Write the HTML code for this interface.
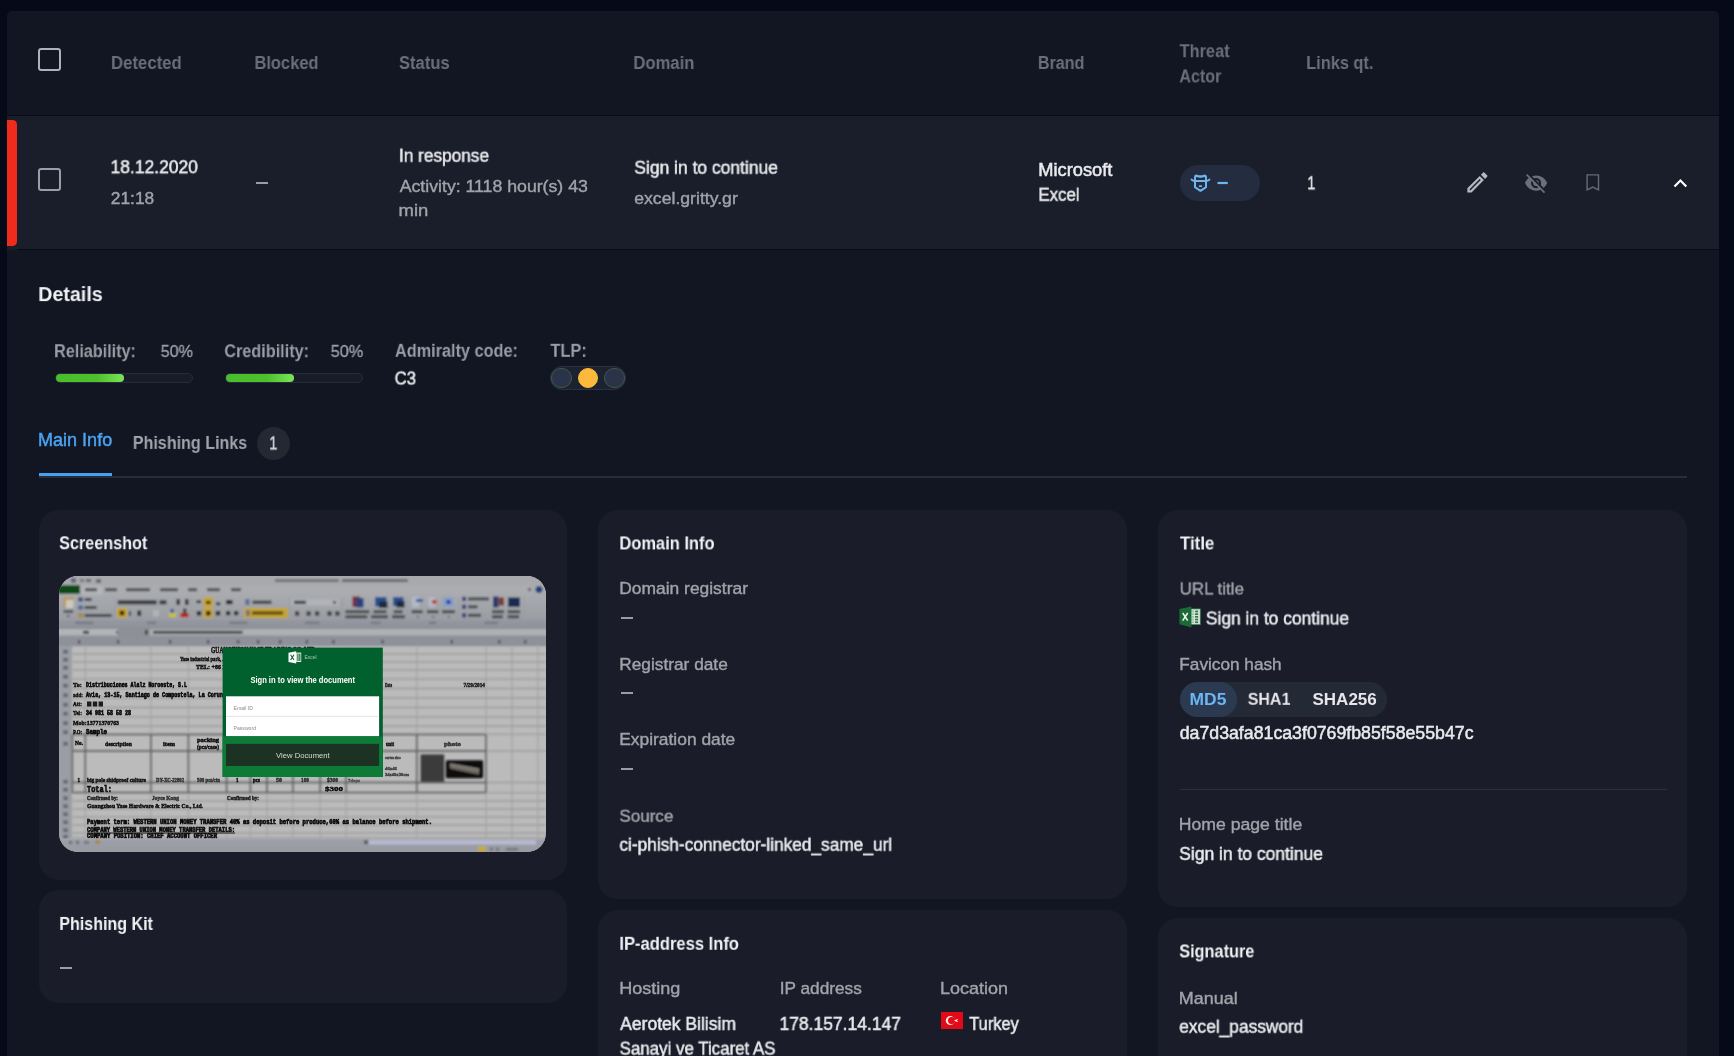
<!DOCTYPE html>
<html lang="en">
<head>
<meta charset="utf-8">
<title>Phishing details</title>
<style>
html,body{margin:0;padding:0;}
body{width:1734px;height:1056px;overflow:hidden;background:#040a17;font-family:"Liberation Sans",sans-serif;position:relative;}
.a{position:absolute;}
.t{position:absolute;white-space:nowrap;line-height:1;transform-origin:0 0;display:block;will-change:transform;}
#cont{left:7px;top:11px;width:1712px;height:1050px;background:#121622;border-radius:5px 5px 0 0;}
#row{left:7px;top:116px;width:1712px;height:134.2px;background:#1a1e2a;}
.hl{left:7px;width:1712px;height:1.4px;background:#070b16;}
#red{left:7px;top:120px;width:10.3px;height:125.9px;background:#ef2b1c;border-radius:0 4.5px 4.5px 0;}
.cb{width:18.9px;height:18.9px;border:2.4px solid #b0b2ba;border-radius:3.2px;}
.dash{height:1.8px;width:12px;background:#9b9da4;}
.card{background:#1a1d29;border-radius:20px;width:528.4px;}
.pill{border-radius:18px;}
.trk{height:8.2px;border:1px solid #272c3a;border-radius:6px;background:#181c28;}
.fill{height:8.4px;border-radius:4px;background:linear-gradient(90deg,#49bd2b 0%,#4dc02d 60%,#7be457 100%);}
.dot{width:18.6px;height:18.6px;border-radius:50%;background:#2a3348;border:1px solid #3c5a4c;}
</style>
</head>
<body>
<div id="cont" class="a"></div>
<div id="row" class="a"></div>
<div class="a hl" style="top:115px"></div>
<div class="a hl" style="top:248.7px;left:17.4px;width:1701.6px;height:1.5px"></div>
<div id="red" class="a"></div>
<div class="a cb" style="left:38.4px;top:47.9px"></div>
<div class="a cb" style="left:38.4px;top:168px;border-color:#9c9ea5"></div>
<div class="a dash" style="left:256.2px;top:182.3px"></div>

<!-- threat actor pill -->
<div class="a pill" style="left:1179.5px;top:165.1px;width:80.2px;height:35.7px;background:#232d3f"></div>
<svg class="a" style="left:1185px;top:170px" width="50" height="26" viewBox="1185 170 50 26" fill="none" stroke="#70b5ef" stroke-width="2" stroke-linejoin="round" stroke-linecap="round">
<path d="M1195 181V177.4Q1195 175.6 1196.8 175.6Q1200.5 176.9 1204.2 175.6Q1206 175.6 1206 177.4V181"/>
<path d="M1196.2 176.4Q1200.5 177.6 1204.8 176.4" stroke-width="1.3"/>
<path d="M1195 181V187.2L1200.5 190.8L1206 187.2V181"/>
<path d="M1191.6 179.6Q1192.8 181 1195 181H1206Q1208.2 181 1209.4 179.6"/>
<path d="M1199.7 186.2H1201.3" stroke-width="1.8"/>
<path d="M1217.5 183H1227.8" stroke-width="2.2" stroke-linecap="butt"/>
</svg>

<!-- action icons -->
<svg class="a" style="left:1463.7px;top:168.7px" width="26.8" height="26.8" viewBox="0 0 24 24" fill="#b6b8bf"><path d="M14.06 9.02l.92.92L5.92 19H5v-.92l9.06-9.06M17.66 3c-.25 0-.51.1-.7.29l-1.83 1.83 3.75 3.75 1.83-1.83c.39-.39.39-1.02 0-1.41l-2.34-2.34c-.2-.2-.45-.29-.71-.29zm-3.6 3.19L3 17.25V21h3.75L17.81 9.94l-3.75-3.75z"/></svg>
<svg class="a" style="left:1523.8px;top:170.8px" width="24.2" height="24.2" viewBox="0 0 24 24" fill="#6c6f7b"><path d="M12 7c2.76 0 5 2.24 5 5 0 .65-.13 1.26-.36 1.83l2.92 2.92c1.51-1.26 2.7-2.89 3.43-4.75-1.73-4.39-6-7.5-11-7.5-1.4 0-2.74.25-3.98.7l2.16 2.16C10.74 7.13 11.35 7 12 7zM2 4.27l2.28 2.28.46.46C3.08 8.3 1.78 10.02 1 12c1.73 4.39 6 7.5 11 7.5 1.55 0 3.03-.3 4.38-.84l.42.42L19.73 22 21 20.73 3.27 3 2 4.27zM7.53 9.8l1.55 1.55c-.05.21-.08.43-.08.65 0 1.66 1.34 3 3 3 .22 0 .44-.03.65-.08l1.55 1.55c-.67.33-1.41.53-2.2.53-2.76 0-5-2.24-5-5 0-.79.2-1.53.53-2.2zm4.31-.78l3.15 3.15.02-.16c0-1.66-1.34-3-3-3l-.17.01z"/></svg>
<svg class="a" style="left:1580px;top:170px" width="26" height="26" viewBox="1580 170 26 26" fill="none" stroke="#676a76" stroke-width="1.4"><path d="M1587.1 174.9H1598.5V189.8L1592.8 187.1L1587.1 189.8Z"/></svg>
<svg class="a" style="left:1667.2px;top:169.7px" width="26.8" height="26.8" viewBox="0 0 24 24" fill="#ffffff"><path d="M12 8l-6 6 1.41 1.41L12 10.83l4.59 4.58L18 14z"/></svg>

<!-- reliability / credibility -->
<div class="a trk" style="left:54.6px;top:373.1px;width:136.3px"></div>
<div class="a fill" style="left:55.7px;top:373.9px;width:68.1px"></div>
<div class="a trk" style="left:224.8px;top:373.1px;width:136.3px"></div>
<div class="a fill" style="left:225.9px;top:373.9px;width:68.1px"></div>

<!-- TLP -->
<div class="a" style="left:549.9px;top:366.3px;width:73.8px;height:21.4px;border:1px solid #2b3140;border-radius:12px;background:#1d2230"></div>
<div class="a dot" style="left:551.2px;top:367.6px"></div>
<div class="a dot" style="left:577.7px;top:367.6px;background:#fdb93b;border-color:#fdb93b"></div>
<div class="a dot" style="left:604.2px;top:367.6px"></div>

<!-- tabs -->
<div class="a" style="left:257.2px;top:426.9px;width:33.2px;height:33.2px;border-radius:50%;background:#242833"></div>
<div class="a" style="left:38.5px;top:475.7px;width:1648px;height:2.2px;background:#292d3a"></div>
<div class="a" style="left:38.5px;top:472.7px;width:73.4px;height:3.1px;background:#46a0f2"></div>

<!-- cards -->
<div class="a card" style="left:38.5px;top:510px;height:369.5px"></div>
<div class="a card" style="left:38.5px;top:890.2px;height:112.6px"></div>
<div class="a card" style="left:598.2px;top:510px;height:389.3px"></div>
<div class="a card" style="left:598.2px;top:909.8px;height:200px"></div>
<div class="a card" style="left:1158.2px;top:510px;height:397.2px"></div>
<div class="a card" style="left:1158.2px;top:918.2px;height:200px"></div>

<div class="a dash" style="left:60.2px;top:967.3px"></div>
<div class="a dash" style="left:620.5px;top:617.4px"></div>
<div class="a dash" style="left:620.5px;top:692.4px"></div>
<div class="a dash" style="left:620.5px;top:768px"></div>

<!-- hash segmented -->
<div class="a pill" style="left:1180px;top:681.8px;width:206.6px;height:35.5px;background:#242936"></div>
<div class="a pill" style="left:1180px;top:681.8px;width:57.3px;height:35.5px;background:#2b3a50"></div>
<div class="a" style="left:1179.5px;top:788.5px;width:487px;height:1.2px;background:#2c303c"></div>

<svg class="a" style="left:940.9px;top:1011.9px" width="22.2" height="17.1" viewBox="0 0 22.2 17.1"><rect width="22.2" height="17.1" fill="#e20a17"/><circle cx="9.3" cy="8.6" r="4.5" fill="#fbeaea"/><circle cx="10.6" cy="8.6" r="3.6" fill="#e20a17"/><path d="M13.6 8.6L16.6 7.6L15.6 8.6L16.6 9.6Z" fill="#fff" stroke="#fff" stroke-width="0.7" stroke-linejoin="round"/></svg>
<svg class="a" style="left:1178px;top:605px" width="24" height="24" viewBox="1178 605 24 24"><rect x="1190.8" y="608.9" width="9.5" height="15.8" fill="#d3e4d8" stroke="#2b7a45" stroke-width="0.7"/><rect x="1195.1" y="610.6" width="3" height="1.7" fill="#2b7a45"/><rect x="1192.2" y="610.6" width="1.6" height="1.7" fill="#8fb99c"/><rect x="1195.1" y="613.3" width="3" height="1.7" fill="#2b7a45"/><rect x="1192.2" y="613.3" width="1.6" height="1.7" fill="#8fb99c"/><rect x="1195.1" y="616" width="3" height="1.7" fill="#2b7a45"/><rect x="1192.2" y="616" width="1.6" height="1.7" fill="#8fb99c"/><rect x="1195.1" y="618.7" width="3" height="1.7" fill="#2b7a45"/><rect x="1192.2" y="618.7" width="1.6" height="1.7" fill="#8fb99c"/><rect x="1195.1" y="621.4" width="3" height="1.7" fill="#2b7a45"/><rect x="1192.2" y="621.4" width="1.6" height="1.7" fill="#8fb99c"/><path d="M1179.4 609.1L1191.4 606.5V627.6L1179.4 624.2Z" fill="#1b6a37"/><path d="M1182.7 613L1187.7 620.6M1187.7 613L1182.7 620.6" stroke="#f2f7f3" stroke-width="1.5"/></svg>
<svg class="a" style="left:59px;top:576px;border-radius:19px" width="487" height="276" viewBox="0 0 487 276"><defs><filter id="b1" x="-5%" y="-5%" width="110%" height="110%"><feGaussianBlur stdDeviation="1.0"/></filter><filter id="b2" x="-5%" y="-5%" width="110%" height="110%"><feGaussianBlur stdDeviation="0.55"/></filter><filter id="b5" x="-5%" y="-5%" width="110%" height="110%"><feGaussianBlur stdDeviation="0.8"/></filter><filter id="b4" x="-5%" y="-5%" width="110%" height="110%"><feGaussianBlur stdDeviation="0.6"/></filter><filter id="b3" x="-5%" y="-5%" width="110%" height="110%"><feGaussianBlur stdDeviation="0.3"/></filter><linearGradient id="rib" x1="0" y1="0" x2="0" y2="1"><stop offset="0" stop-color="#a9abaf"/><stop offset="1" stop-color="#9699a0"/></linearGradient></defs><rect x="0" y="0" width="487" height="276" fill="#bbbbbb" /><g filter="url(#b1)"><rect x="-2" y="-2" width="491" height="12" fill="#a7a9ac" /><rect x="-2" y="9" width="491" height="10" fill="#aaacaf" /><rect x="-2" y="18" width="491" height="33" fill="url(#rib)" /><rect x="-2" y="44.5" width="491" height="6" fill="#92959d" /><rect x="-2" y="50" width="491" height="11.5" fill="#8d9097" /><rect x="-2" y="53" width="61" height="6.6" fill="#b2b4b7" /><rect x="91" y="53" width="400" height="6.6" fill="#aeb0b4" /><rect x="-2" y="61" width="491" height="9.2" fill="#8e919a" /><rect x="-2" y="70" width="15" height="193" fill="#9a9da3" /><rect x="-2" y="9.2" width="23" height="8.6" fill="#0a4a13" /><rect x="23" y="9.8" width="20" height="9" fill="#b4b6b9" /><rect x="216" y="3.2" width="64" height="2.8" fill="#6f7176" /><rect x="283" y="3.2" width="66" height="2.8" fill="#64666b" /><rect x="12" y="2.5" width="5" height="4" fill="#5a5c7a" /><rect x="21" y="3" width="4" height="3" fill="#777" /><rect x="27" y="3" width="5" height="3" fill="#666" /><rect x="37" y="3.5" width="5" height="3" fill="#555" /><rect x="26" y="12.2" width="12" height="3" fill="#4c4e53" /><rect x="46" y="12.2" width="12" height="3" fill="#4c4e53" /><rect x="67" y="12.2" width="24" height="3" fill="#4c4e53" /><rect x="101" y="12.2" width="18" height="3" fill="#4c4e53" /><rect x="129" y="12.2" width="9" height="3" fill="#4c4e53" /><rect x="148" y="12.2" width="13" height="3" fill="#4c4e53" /><rect x="172" y="12.2" width="10" height="3" fill="#4c4e53" /><circle cx="480" cy="13.6" r="3.5" fill="#1f3f7a"/><rect x="469" y="12" width="3" height="3" fill="#666" /><rect x="4.6" y="21" width="10" height="11" fill="#b99a58" /><rect x="7" y="24" width="7.5" height="8" fill="#c9c9c4" /><rect x="4.6" y="34" width="9.5" height="3" fill="#55575c" /><rect x="8" y="39" width="2.5" height="2" fill="#55575c" /><rect x="19" y="21.5" width="5" height="4" fill="#3b4f8a" /><rect x="25.6" y="22" width="7" height="3" fill="#45474c" /><rect x="19" y="29.5" width="5" height="4" fill="#4a6a9a" /><rect x="25.6" y="30" width="12" height="3" fill="#45474c" /><rect x="19" y="37.5" width="5" height="4" fill="#a98a2a" /><rect x="25.6" y="38" width="27" height="3" fill="#45474c" /><rect x="58" y="32" width="10" height="10" fill="#c8a42c" /><rect x="60.8" y="34.8" width="4.4" height="4.4" fill="#151515" /><rect x="58.7" y="24.2" width="39" height="4.2" fill="#3b3d42" /><rect x="100.5" y="24.2" width="7" height="4.2" fill="#3b3d42" /><rect x="117.5" y="23" width="3.5" height="6" fill="#333" /><rect x="126" y="23" width="3.5" height="6" fill="#333" /><rect x="70" y="35" width="1.8" height="5" fill="#333" /><rect x="78.5" y="34.5" width="3.6" height="5.5" fill="#2b2b2b" /><rect x="94" y="34" width="6" height="6.5" fill="#b0b2b7" /><rect x="110" y="36.5" width="7" height="4.5" fill="#c7c12e" /><rect x="111.5" y="33" width="3.5" height="4" fill="#3b5aa0" /><rect x="121.5" y="37" width="8" height="4.2" fill="#b81f1f" /><rect x="124" y="32.5" width="3.5" height="5" fill="#444" /><rect x="144.5" y="21.2" width="9.4" height="10" fill="#c8a42c" /><rect x="144.5" y="32" width="9.4" height="10" fill="#c8a42c" /><rect x="147" y="25" width="4.4" height="3" fill="#1a1a1a" /><rect x="147" y="35" width="4.4" height="4.4" fill="#1a1a1a" /><rect x="137.5" y="24.5" width="4.5" height="2.6" fill="#222" /><rect x="137.8" y="35" width="4.4" height="4.4" fill="#222" /><rect x="157" y="26.5" width="4.2" height="2.6" fill="#222" /><rect x="156.8" y="35" width="4.4" height="4.4" fill="#222" /><rect x="167" y="24" width="6.5" height="4.2" fill="#222" /><rect x="167" y="35" width="4.2" height="4.2" fill="#222" /><rect x="175" y="35" width="4.2" height="4.2" fill="#222" /><rect x="186.3" y="23" width="4.2" height="6" fill="#5b6f94" /><rect x="193.5" y="24.6" width="19" height="3.4" fill="#45474c" /><rect x="184.9" y="32" width="44" height="10" fill="#c8a42c" /><rect x="187" y="34.2" width="4" height="5.5" fill="#6a6f86" /><rect x="193" y="35.3" width="31" height="3.4" fill="#5f4f18" /><rect x="232.5" y="23.2" width="47" height="6.2" fill="#b1b3b6" /><rect x="235" y="24.8" width="12" height="3.2" fill="#3b3d42" /><rect x="274" y="25" width="3" height="2.5" fill="#444" /><rect x="236" y="35.3" width="4.2" height="4.4" fill="#3c3e44" /><rect x="247.5" y="35.3" width="4.2" height="4.4" fill="#3c3e44" /><rect x="256" y="35.3" width="4.2" height="4.4" fill="#3c3e44" /><rect x="268.4" y="35.3" width="4.2" height="4.4" fill="#3c3e44" /><rect x="276.3" y="35.3" width="4.2" height="4.4" fill="#3c3e44" /><rect x="293.5" y="20.5" width="7.5" height="10.5" fill="#7a2a3a" /><rect x="297" y="22" width="7.5" height="9.5" fill="#2a3f7a" /><rect x="316" y="21" width="11.5" height="9.5" fill="#2a4f92" /><rect x="320" y="25.5" width="8.5" height="6.5" fill="#1f2a3c" /><rect x="334" y="21" width="10.5" height="9" fill="#2a4f92" /><rect x="337.5" y="25" width="8" height="6.5" fill="#1f2a3c" /><rect x="353" y="21" width="7" height="10" fill="#b4b9c4" /><rect x="357" y="23" width="7" height="3" fill="#2a5fa8" /><rect x="369.5" y="21" width="6.5" height="10" fill="#b4b9c4" /><rect x="373" y="24" width="4.5" height="3.5" fill="#c02a2a" /><rect x="384" y="21" width="11" height="10" fill="#8a9fc8" /><rect x="387.5" y="24" width="4" height="4" fill="#1f3f9a" /><rect x="286.4" y="34.2" width="24" height="3" fill="#45474c" /><rect x="314.5" y="34.2" width="13" height="3" fill="#45474c" /><rect x="334.7" y="34.2" width="9" height="3" fill="#45474c" /><rect x="352.7" y="34.2" width="11" height="3" fill="#45474c" /><rect x="367.9" y="34.2" width="11.5" height="3" fill="#45474c" /><rect x="383" y="34.2" width="13" height="3" fill="#45474c" /><rect x="286.4" y="39.3" width="22" height="3" fill="#45474c" /><rect x="312" y="39.3" width="17" height="3" fill="#45474c" /><rect x="333" y="39.3" width="13" height="3" fill="#45474c" /><rect x="358" y="40" width="1.6" height="1.6" fill="#45474c" /><rect x="373.5" y="40" width="1.6" height="1.6" fill="#45474c" /><rect x="389" y="40" width="1.6" height="1.6" fill="#45474c" /><rect x="403.2" y="20.799999999999997" width="3.8" height="4.2" fill="#2a3a7a" /><rect x="409" y="21.4" width="21" height="3" fill="#45474c" /><rect x="403.2" y="28.7" width="3.8" height="4.2" fill="#2a3a7a" /><rect x="409" y="29.3" width="9.5" height="3" fill="#45474c" /><rect x="403.2" y="37.199999999999996" width="3.8" height="4.2" fill="#2a3a7a" /><rect x="409" y="37.8" width="13" height="3" fill="#45474c" /><rect x="434" y="20.5" width="5.5" height="11" fill="#2a3a6a" /><rect x="439.5" y="21.5" width="5.5" height="8" fill="#7a3a3a" /><rect x="449" y="21.5" width="12" height="9.5" fill="#1a2a52" /><rect x="433" y="34.2" width="12" height="3" fill="#45474c" /><rect x="433" y="39.3" width="11" height="3" fill="#45474c" /><rect x="448.6" y="34.2" width="12.5" height="3" fill="#45474c" /><rect x="448.6" y="39.3" width="11.5" height="3" fill="#45474c" /><rect x="16.2" y="45.6" width="18" height="2.5" fill="#777a84" /><rect x="88.3" y="45.6" width="8.7" height="2.5" fill="#777a84" /><rect x="170.5" y="45.6" width="18" height="2.5" fill="#777a84" /><rect x="246" y="45.6" width="14.5" height="2.5" fill="#777a84" /><rect x="311.6" y="45.6" width="10" height="2.5" fill="#777a84" /><rect x="370" y="45.6" width="7.2" height="2.5" fill="#777a84" /><rect x="425.5" y="45.6" width="13.7" height="2.5" fill="#777a84" /><rect x="55.1" y="21" width="0.8" height="28" fill="#979aa2" /><rect x="132.3" y="21" width="0.8" height="28" fill="#979aa2" /><rect x="230.3" y="21" width="0.8" height="28" fill="#979aa2" /><rect x="282.8" y="21" width="0.8" height="28" fill="#979aa2" /><rect x="347.7" y="21" width="0.8" height="28" fill="#979aa2" /><rect x="398.9" y="21" width="0.8" height="28" fill="#979aa2" /><rect x="465.2" y="21" width="0.8" height="28" fill="#979aa2" /><rect x="24" y="54.8" width="6" height="3" fill="#45474c" /><rect x="57" y="55.3" width="2" height="2" fill="#333" /><rect x="86" y="54" width="2.5" height="4.5" fill="#333" /><rect x="94" y="54.8" width="89.5" height="3" fill="#484a50" /><rect x="19" y="64" width="2.2" height="3.6" fill="#494c56" /><rect x="58" y="64" width="2.2" height="3.6" fill="#494c56" /><rect x="110" y="64" width="2.2" height="3.6" fill="#494c56" /><rect x="148" y="64" width="2.2" height="3.6" fill="#494c56" /><rect x="178" y="64" width="2.2" height="3.6" fill="#494c56" /><rect x="198" y="64" width="2.2" height="3.6" fill="#494c56" /><rect x="220" y="64" width="2.2" height="3.6" fill="#494c56" /><rect x="246.8" y="64" width="2.2" height="3.6" fill="#494c56" /><rect x="273.4" y="64" width="2.2" height="3.6" fill="#494c56" /><rect x="322.5" y="64" width="2.2" height="3.6" fill="#494c56" /><rect x="391.7" y="64" width="2.2" height="3.6" fill="#494c56" /><rect x="439.2" y="64" width="2.2" height="3.6" fill="#494c56" /><rect x="465.2" y="64" width="2.2" height="3.6" fill="#494c56" /></g><g filter="url(#b5)"><path d="M13 78L487 78" stroke="#9c9c9c" stroke-width="1.3"/><path d="M13 86L487 86" stroke="#9c9c9c" stroke-width="1.3"/><path d="M13 94L487 94" stroke="#9c9c9c" stroke-width="1.3"/><path d="M13 103L487 103" stroke="#9c9c9c" stroke-width="1.3"/><path d="M13 112.5L487 112.5" stroke="#9c9c9c" stroke-width="1.3"/><path d="M13 122L487 122" stroke="#9c9c9c" stroke-width="1.3"/><path d="M13 131.5L487 131.5" stroke="#9c9c9c" stroke-width="1.3"/><path d="M13 141L487 141" stroke="#9c9c9c" stroke-width="1.3"/><path d="M13 150L487 150" stroke="#9c9c9c" stroke-width="1.3"/><path d="M13 158.4L487 158.4" stroke="#9c9c9c" stroke-width="1.3"/><path d="M13 175L487 175" stroke="#9c9c9c" stroke-width="1.3"/><path d="M13 206.5L487 206.5" stroke="#9c9c9c" stroke-width="1.3"/><path d="M13 216.6L487 216.6" stroke="#9c9c9c" stroke-width="1.3"/><path d="M13 225L487 225" stroke="#9c9c9c" stroke-width="1.3"/><path d="M13 233L487 233" stroke="#9c9c9c" stroke-width="1.3"/><path d="M13 241L487 241" stroke="#9c9c9c" stroke-width="1.3"/><path d="M13 249L487 249" stroke="#9c9c9c" stroke-width="1.3"/><path d="M13 257L487 257" stroke="#9c9c9c" stroke-width="1.3"/><path d="M13 262L487 262" stroke="#9c9c9c" stroke-width="1.3"/><path d="M26.3 70L26.3 262" stroke="#a3a3a3" stroke-width="1.2"/><path d="M91.9 70L91.9 262" stroke="#a3a3a3" stroke-width="1.2"/><path d="M129.4 70L129.4 262" stroke="#a3a3a3" stroke-width="1.2"/><path d="M167.6 70L167.6 262" stroke="#a3a3a3" stroke-width="1.2"/><path d="M191.4 70L191.4 262" stroke="#a3a3a3" stroke-width="1.2"/><path d="M208 70L208 262" stroke="#a3a3a3" stroke-width="1.2"/><path d="M233.9 70L233.9 262" stroke="#a3a3a3" stroke-width="1.2"/><path d="M261.2 70L261.2 262" stroke="#a3a3a3" stroke-width="1.2"/><path d="M287.1 70L287.1 262" stroke="#a3a3a3" stroke-width="1.2"/><path d="M357.8 70L357.8 262" stroke="#a3a3a3" stroke-width="1.2"/><path d="M427 70L427 262" stroke="#a3a3a3" stroke-width="1.2"/><path d="M453 70L453 262" stroke="#a3a3a3" stroke-width="1.2"/><path d="M478.9 70L478.9 262" stroke="#a3a3a3" stroke-width="1.2"/><path d="M13 158.4L427 158.4" stroke="#5e5e5e" stroke-width="1.5"/><path d="M13 175L427 175" stroke="#5e5e5e" stroke-width="1.5"/><path d="M13 206.5L427 206.5" stroke="#5e5e5e" stroke-width="1.5"/><path d="M13 216.6L427 216.6" stroke="#5e5e5e" stroke-width="1.5"/><path d="M13.3 158.4L13.3 216.6" stroke="#5e5e5e" stroke-width="1.5"/><path d="M26.3 158.4L26.3 216.6" stroke="#5e5e5e" stroke-width="1.5"/><path d="M91.9 158.4L91.9 216.6" stroke="#5e5e5e" stroke-width="1.5"/><path d="M129.4 158.4L129.4 216.6" stroke="#5e5e5e" stroke-width="1.5"/><path d="M167.6 158.4L167.6 216.6" stroke="#5e5e5e" stroke-width="1.5"/><path d="M191.4 158.4L191.4 216.6" stroke="#5e5e5e" stroke-width="1.5"/><path d="M208 158.4L208 216.6" stroke="#5e5e5e" stroke-width="1.5"/><path d="M233.9 158.4L233.9 216.6" stroke="#5e5e5e" stroke-width="1.5"/><path d="M261.2 158.4L261.2 216.6" stroke="#5e5e5e" stroke-width="1.5"/><path d="M287.1 158.4L287.1 216.6" stroke="#5e5e5e" stroke-width="1.5"/><path d="M357.8 158.4L357.8 216.6" stroke="#5e5e5e" stroke-width="1.5"/><path d="M427 158.4L427 216.6" stroke="#5e5e5e" stroke-width="1.5"/><rect x="4.5" y="74" width="4" height="3.4" fill="#5d606a" /><rect x="4.5" y="82" width="4" height="3.4" fill="#5d606a" /><rect x="4.5" y="90" width="4" height="3.4" fill="#5d606a" /><rect x="4.5" y="99" width="4" height="3.4" fill="#5d606a" /><rect x="4.5" y="108" width="4" height="3.4" fill="#5d606a" /><rect x="4.5" y="117.5" width="4" height="3.4" fill="#5d606a" /><rect x="4.5" y="127" width="4" height="3.4" fill="#5d606a" /><rect x="4.5" y="136" width="4" height="3.4" fill="#5d606a" /><rect x="4.5" y="145.5" width="4" height="3.4" fill="#5d606a" /><rect x="4.5" y="154.5" width="4" height="3.4" fill="#5d606a" /><rect x="4.5" y="166" width="4" height="3.4" fill="#5d606a" /><rect x="4.5" y="204" width="4" height="3.4" fill="#5d606a" /><rect x="4.5" y="212" width="4" height="3.4" fill="#5d606a" /><rect x="4.5" y="220.5" width="4" height="3.4" fill="#5d606a" /><rect x="4.5" y="228.5" width="4" height="3.4" fill="#5d606a" /><rect x="4.5" y="236.5" width="4" height="3.4" fill="#5d606a" /><rect x="4.5" y="244.5" width="4" height="3.4" fill="#5d606a" /><rect x="4.5" y="252.5" width="4" height="3.4" fill="#5d606a" /><rect x="4.5" y="259" width="4" height="3.4" fill="#5d606a" /><rect x="361.6" y="178.4" width="23.6" height="27.4" fill="#3b3b3b" /><rect x="386.8" y="184.2" width="37.4" height="18" fill="#0b0b0b" rx="1.5"/><path d="M391 187.5L420 192.5L420 198.5L391 192.5Z" fill="#6f6a64"/><path d="M391 188.3L420 193.6" stroke="#9a958e" stroke-width="1"/></g><g filter="url(#b4)"><text x="152" y="76.5" font-size="7.5" font-weight="bold" fill="#111" font-family="Liberation Serif" textLength="104" lengthAdjust="spacingAndGlyphs"  stroke="#111" stroke-width="0.45">GUANGZHOU YASE TRADING CO.,LTD</text><text x="121" y="85" font-size="6" font-weight="bold" fill="#111" font-family="Liberation Serif" textLength="60" lengthAdjust="spacingAndGlyphs"  stroke="#111" stroke-width="0.45">Yase industrial park, Jianggao</text><text x="137" y="93" font-size="6" font-weight="bold" fill="#111" font-family="Liberation Serif" textLength="40" lengthAdjust="spacingAndGlyphs"  stroke="#111" stroke-width="0.45">TEL: +86 20 36</text><text x="14" y="111" font-size="6.5" font-weight="bold" fill="#111" font-family="Liberation Serif" textLength="9" lengthAdjust="spacingAndGlyphs"  stroke="#111" stroke-width="0.45">To:</text><text x="27" y="111" font-size="6.5" font-weight="bold" fill="#111" font-family="Liberation Mono" textLength="101" lengthAdjust="spacingAndGlyphs"  stroke="#111" stroke-width="0.7">Distribuciones Alalz Noroeste, S.L</text><text x="14" y="120.5" font-size="6.5" font-weight="bold" fill="#111" font-family="Liberation Serif" textLength="10" lengthAdjust="spacingAndGlyphs"  stroke="#111" stroke-width="0.45">add:</text><text x="27" y="120.5" font-size="6.5" font-weight="bold" fill="#111" font-family="Liberation Mono" textLength="140" lengthAdjust="spacingAndGlyphs"  stroke="#111" stroke-width="0.7">Avia, 13-15, Santiago de Compostela, La Coruna</text><text x="14" y="130" font-size="6.5" font-weight="bold" fill="#111" font-family="Liberation Serif" textLength="9" lengthAdjust="spacingAndGlyphs"  stroke="#111" stroke-width="0.45">Att:</text><rect x="28" y="125.5" width="4.4" height="5" fill="#1a1a1a" /><rect x="33.8" y="125.5" width="4.4" height="5" fill="#1a1a1a" /><rect x="39.6" y="125.5" width="4.4" height="5" fill="#1a1a1a" /><text x="14" y="139" font-size="6.5" font-weight="bold" fill="#111" font-family="Liberation Serif" textLength="9" lengthAdjust="spacingAndGlyphs"  stroke="#111" stroke-width="0.45">Tel:</text><text x="27" y="139" font-size="6.5" font-weight="bold" fill="#111" font-family="Liberation Mono" textLength="45" lengthAdjust="spacingAndGlyphs"  stroke="#111" stroke-width="0.7">34 981 58 58 28</text><text x="14" y="148.5" font-size="6" font-weight="bold" fill="#111" font-family="Liberation Serif" textLength="46" lengthAdjust="spacingAndGlyphs"  stroke="#111" stroke-width="0.45">Mob:13771370763</text><text x="14" y="157.5" font-size="6.5" font-weight="bold" fill="#111" font-family="Liberation Serif" textLength="9" lengthAdjust="spacingAndGlyphs"  stroke="#111" stroke-width="0.45">P.O:</text><text x="27" y="157.5" font-size="6.5" font-weight="bold" fill="#111" font-family="Liberation Mono" textLength="21" lengthAdjust="spacingAndGlyphs"  stroke="#111" stroke-width="0.7">Sample</text><text x="16" y="169" font-size="5.5" font-weight="bold" fill="#111" font-family="Liberation Serif" textLength="8" lengthAdjust="spacingAndGlyphs"  stroke="#111" stroke-width="0.45">No.</text><text x="46" y="169.5" font-size="6" font-weight="bold" fill="#111" font-family="Liberation Serif" textLength="27" lengthAdjust="spacingAndGlyphs"  stroke="#111" stroke-width="0.45">description</text><text x="104" y="169.5" font-size="6" font-weight="bold" fill="#111" font-family="Liberation Serif" textLength="12" lengthAdjust="spacingAndGlyphs"  stroke="#111" stroke-width="0.45">item</text><text x="138" y="166" font-size="5.5" font-weight="bold" fill="#111" font-family="Liberation Serif" textLength="22" lengthAdjust="spacingAndGlyphs"  stroke="#111" stroke-width="0.45">packing</text><text x="138" y="173" font-size="5.5" font-weight="bold" fill="#111" font-family="Liberation Serif" textLength="22" lengthAdjust="spacingAndGlyphs"  stroke="#111" stroke-width="0.45">(pcs/case)</text><text x="327" y="169.5" font-size="5.5" font-weight="bold" fill="#111" font-family="Liberation Serif" textLength="8" lengthAdjust="spacingAndGlyphs"  stroke="#111" stroke-width="0.45">unit</text><text x="385" y="169.5" font-size="6" font-weight="bold" fill="#333" font-family="Liberation Serif" textLength="17" lengthAdjust="spacingAndGlyphs"  stroke="#333" stroke-width="0.45">photo</text><text x="18.5" y="206" font-size="5.5" font-weight="bold" fill="#111" font-family="Liberation Serif" textLength="2.5" lengthAdjust="spacingAndGlyphs"  stroke="#111" stroke-width="0.45">1</text><text x="28" y="206" font-size="6" font-weight="bold" fill="#111" font-family="Liberation Serif" textLength="59" lengthAdjust="spacingAndGlyphs"  stroke="#111" stroke-width="0.45">big pole shidproof culture</text><text x="97" y="206" font-size="5.5" font-weight="bold" fill="#333" font-family="Liberation Serif" textLength="28" lengthAdjust="spacingAndGlyphs"  stroke="#333" stroke-width="0.45">DY-XC-22802</text><text x="138" y="206" font-size="5.5" font-weight="bold" fill="#333" font-family="Liberation Serif" textLength="23" lengthAdjust="spacingAndGlyphs"  stroke="#333" stroke-width="0.45">500 pcs/ctn</text><text x="177" y="206" font-size="5.5" font-weight="bold" fill="#111" font-family="Liberation Serif" textLength="2.5" lengthAdjust="spacingAndGlyphs"  stroke="#111" stroke-width="0.45">1</text><text x="194" y="206" font-size="5.5" font-weight="bold" fill="#111" font-family="Liberation Serif" textLength="7" lengthAdjust="spacingAndGlyphs"  stroke="#111" stroke-width="0.45">pcs</text><text x="217" y="206" font-size="5.5" font-weight="bold" fill="#333" font-family="Liberation Serif" textLength="6" lengthAdjust="spacingAndGlyphs"  stroke="#333" stroke-width="0.45">50</text><text x="242" y="206" font-size="5.5" font-weight="bold" fill="#333" font-family="Liberation Serif" textLength="8" lengthAdjust="spacingAndGlyphs"  stroke="#333" stroke-width="0.45">100</text><text x="268" y="206" font-size="5.5" font-weight="bold" fill="#333" font-family="Liberation Serif" textLength="11" lengthAdjust="spacingAndGlyphs"  stroke="#333" stroke-width="0.45">$300</text><text x="289" y="206" font-size="5" font-weight="bold" fill="#555" font-family="Liberation Serif" textLength="12" lengthAdjust="spacingAndGlyphs"  stroke="#555" stroke-width="0.45">7days</text><text x="326" y="183" font-size="5" font-weight="bold" fill="#444" font-family="Liberation Serif" textLength="16" lengthAdjust="spacingAndGlyphs"  stroke="#444" stroke-width="0.45">carton size:</text><text x="326" y="194" font-size="5" font-weight="bold" fill="#444" font-family="Liberation Serif" textLength="12" lengthAdjust="spacingAndGlyphs"  stroke="#444" stroke-width="0.45">46x46</text><text x="326" y="200" font-size="5" font-weight="bold" fill="#444" font-family="Liberation Serif" textLength="24" lengthAdjust="spacingAndGlyphs"  stroke="#444" stroke-width="0.45">34x40x30cm</text><text x="28" y="215.5" font-size="8.5" font-weight="bold" fill="#111" font-family="Liberation Mono" textLength="25" lengthAdjust="spacingAndGlyphs"  stroke="#111" stroke-width="0.7">Total:</text><text x="266" y="215" font-size="6.5" font-weight="bold" fill="#111" font-family="Liberation Serif" textLength="18" lengthAdjust="spacingAndGlyphs"  stroke="#111" stroke-width="0.45">$300</text><text x="28" y="224" font-size="5.5" font-weight="bold" fill="#222" font-family="Liberation Serif" textLength="31" lengthAdjust="spacingAndGlyphs"  stroke="#222" stroke-width="0.45">Confirmed by:</text><text x="93" y="224" font-size="5.5" font-weight="bold" fill="#333" font-family="Liberation Serif" textLength="27" lengthAdjust="spacingAndGlyphs"  stroke="#333" stroke-width="0.45">Joyce Kong</text><text x="168" y="224" font-size="5.5" font-weight="bold" fill="#222" font-family="Liberation Serif" textLength="32" lengthAdjust="spacingAndGlyphs"  stroke="#222" stroke-width="0.45">Confirmed by:</text><text x="28" y="232" font-size="6" font-weight="bold" fill="#111" font-family="Liberation Serif" textLength="116" lengthAdjust="spacingAndGlyphs"  stroke="#111" stroke-width="0.45">Guangzhou Yase Hardware &amp; Electric Co., Ltd.</text><text x="28" y="247.5" font-size="6.5" font-weight="bold" fill="#111" font-family="Liberation Mono" textLength="345" lengthAdjust="spacingAndGlyphs"  stroke="#111" stroke-width="0.7">Payment term: WESTERN UNION MONEY TRANSFER 40% as deposit before produce,60% as balance before shipment.</text><text x="28" y="255.5" font-size="6.5" font-weight="bold" fill="#111" font-family="Liberation Mono" textLength="148" lengthAdjust="spacingAndGlyphs"  stroke="#111" stroke-width="0.7">COMPANY WESTERN UNION MONEY TRANSFER DETAILS:</text><rect x="28" y="256.6" width="148" height="0.9" fill="#111" /><text x="28" y="262.2" font-size="6.3" font-weight="bold" fill="#111" font-family="Liberation Mono" textLength="130" lengthAdjust="spacingAndGlyphs"  stroke="#111" stroke-width="0.7">COMPANY POSITION: CHIEF ACCOUNT OFFICER</text><text x="404.5" y="111" font-size="5.5" font-weight="bold" fill="#222" font-family="Liberation Serif" textLength="21.5" lengthAdjust="spacingAndGlyphs"  stroke="#222" stroke-width="0.45">7/29/2014</text><text x="326" y="111" font-size="5.5" font-weight="bold" fill="#222" font-family="Liberation Serif" textLength="7" lengthAdjust="spacingAndGlyphs"  stroke="#222" stroke-width="0.45">Date</text></g><g filter="url(#b1)"><rect x="-2" y="263" width="491" height="8" fill="#9b9ea9" /><rect x="310" y="264.2" width="167" height="4.2" fill="#b9bbd3" /><rect x="305" y="264.5" width="4" height="3.5" fill="#555" /><rect x="-2" y="270" width="491" height="8" fill="#999ca2" /><rect x="419" y="270.5" width="8" height="5" fill="#c9a93a" /><rect x="431" y="271.5" width="3" height="3.5" fill="#777" /><rect x="437" y="271.5" width="3" height="3.5" fill="#777" /><rect x="447" y="272" width="12" height="2.6" fill="#777" /><rect x="10" y="265" width="3" height="3" fill="#666" /><rect x="17" y="265" width="3" height="3" fill="#666" /><rect x="25" y="265" width="5" height="3" fill="#777" /><rect x="36" y="264" width="5" height="4" fill="#a98a4a" /></g><g filter="url(#b3)"><rect x="163.6" y="71.6" width="160.2" height="129.4" fill="#06602d" /><rect x="163.6" y="160.4" width="160.2" height="40.6" fill="#077a38" /><rect x="167" y="120.3" width="153.1" height="39.8" fill="#ffffff" /><rect x="167" y="139.9" width="153.1" height="0.7" fill="#d9d9d9" /><rect x="167" y="167.9" width="153.1" height="22.1" fill="#1e3323" /><path d="M229.5 76.8L237.2 75.3V87.4L229.5 85.9Z" fill="#fff"/><rect x="237.2" y="76.6" width="5" height="9.4" fill="#e9f2ec" /><rect x="238.4" y="77.6" width="1.1" height="7.4" fill="#06602d" /><rect x="240.3" y="77.6" width="1.1" height="7.4" fill="#06602d" /><path d="M231.6 78.8L235 84M235 78.8L231.6 84" stroke="#06602d" stroke-width="1.1"/><text x="245.5" y="83.2" font-size="5.6" font-weight="normal" fill="#a9cdb7" font-family="Liberation Sans" textLength="12" lengthAdjust="spacingAndGlyphs" >Excel</text><text x="191.4" y="107" font-size="8.2" font-weight="bold" fill="#ffffff" font-family="Liberation Sans" textLength="104.6" lengthAdjust="spacingAndGlyphs" >Sign in to view the document</text><text x="174.5" y="133.8" font-size="5.2" font-weight="normal" fill="#8a8a8a" font-family="Liberation Sans" textLength="19.5" lengthAdjust="spacingAndGlyphs" >Email ID</text><text x="174.5" y="153.6" font-size="5.2" font-weight="normal" fill="#8a8a8a" font-family="Liberation Sans" textLength="22.5" lengthAdjust="spacingAndGlyphs" >Password</text><text x="217.1" y="181.5" font-size="7.3" font-weight="normal" fill="#d6dad7" font-family="Liberation Sans" textLength="53.6" lengthAdjust="spacingAndGlyphs" >View Document</text></g></svg>
<span class="t" style="left:110px;top:55px;font-size:17.6px;color:#6c6f7b;transform:translate(0.95px,0.00px) scaleX(0.9527);font-weight:700;">Detected</span>
<span class="t" style="left:254px;top:55px;font-size:17.6px;color:#6c6f7b;transform:translate(0.47px,0.00px) scaleX(0.9345);font-weight:700;">Blocked</span>
<span class="t" style="left:398px;top:55px;font-size:17.6px;color:#6c6f7b;transform:translate(0.94px,0.00px) scaleX(0.9432);font-weight:700;">Status</span>
<span class="t" style="left:633px;top:55px;font-size:17.6px;color:#6c6f7b;transform:translate(0.36px,0.00px) scaleX(0.9459);font-weight:700;">Domain</span>
<span class="t" style="left:1037px;top:55px;font-size:17.6px;color:#6c6f7b;transform:translate(0.89px,0.00px) scaleX(0.9152);font-weight:700;">Brand</span>
<span class="t" style="left:1179px;top:43px;font-size:17.6px;color:#6c6f7b;transform:translate(0.60px,0.20px) scaleX(0.9292);font-weight:700;">Threat</span>
<span class="t" style="left:1179px;top:68px;font-size:17.6px;color:#6c6f7b;transform:translate(0.35px,0.40px) scaleX(0.9156);font-weight:700;">Actor</span>
<span class="t" style="left:1306px;top:55px;font-size:17.6px;color:#6c6f7b;transform:translate(0.18px,0.00px) scaleX(0.9299);font-weight:700;">Links qt.</span>
<span class="t" style="left:110px;top:159px;font-size:17.6px;color:#e9eaed;transform:translate(0.56px,0.20px) scaleX(0.9914);-webkit-text-stroke:0.5px #e9eaed;">18.12.2020</span>
<span class="t" style="left:110px;top:189px;font-size:17.1px;color:#a1a3aa;transform:translate(0.78px,0.50px) scaleX(1.0170);-webkit-text-stroke:0.4px #a1a3aa;">21:18</span>
<span class="t" style="left:398px;top:147px;font-size:17.6px;color:#e9eaed;transform:translate(0.90px,0.70px) scaleX(0.9802);-webkit-text-stroke:0.5px #e9eaed;">In response</span>
<span class="t" style="left:399px;top:178px;font-size:17.1px;color:#a1a3aa;transform:translate(0.70px,0.20px) scaleX(1.0350);-webkit-text-stroke:0.4px #a1a3aa;">Activity: 1118 hour(s) 43</span>
<span class="t" style="left:398px;top:201px;font-size:17.1px;color:#a1a3aa;transform:translate(0.54px,0.80px) scaleX(1.0813);-webkit-text-stroke:0.4px #a1a3aa;">min</span>
<span class="t" style="left:634px;top:159px;font-size:17.6px;color:#e9eaed;transform:translate(0.30px,0.70px) scaleX(0.9920);-webkit-text-stroke:0.5px #e9eaed;">Sign in to continue</span>
<span class="t" style="left:634px;top:189px;font-size:17.1px;color:#a1a3aa;transform:translate(0.25px,0.60px) scaleX(1.0311);-webkit-text-stroke:0.4px #a1a3aa;">excel.gritty.gr</span>
<span class="t" style="left:1038px;top:162px;font-size:17.6px;color:#e9eaed;transform:translate(0.22px,0.10px) scaleX(1.0389);-webkit-text-stroke:0.5px #e9eaed;">Microsoft</span>
<span class="t" style="left:1038px;top:186px;font-size:17.6px;color:#e9eaed;transform:translate(0.33px,0.80px) scaleX(0.9604);-webkit-text-stroke:0.5px #e9eaed;">Excel</span>
<span class="t" style="left:1307px;top:175px;font-size:17.6px;color:#e9eaed;transform:translate(0.35px,0.30px) scaleX(0.8150);-webkit-text-stroke:0.5px #e9eaed;">1</span>
<span class="t" style="left:38px;top:284px;font-size:20px;color:#f0f1f3;transform:translate(0.17px,0.10px) scaleX(0.9839);font-weight:700;">Details</span>
<span class="t" style="left:54px;top:343px;font-size:17.6px;color:#9b9da6;transform:translate(0.09px,0.20px) scaleX(0.9198);font-weight:700;">Reliability:</span>
<span class="t" style="left:160px;top:343px;font-size:17.1px;color:#9b9da6;transform:translate(0.70px,0.00px) scaleX(0.9403);-webkit-text-stroke:0.4px #9b9da6;">50%</span>
<span class="t" style="left:224px;top:343px;font-size:17.6px;color:#9b9da6;transform:translate(0.29px,0.20px) scaleX(0.9221);font-weight:700;">Credibility:</span>
<span class="t" style="left:330px;top:343px;font-size:17.1px;color:#9b9da6;transform:translate(0.69px,0.00px) scaleX(0.9523);-webkit-text-stroke:0.4px #9b9da6;">50%</span>
<span class="t" style="left:394px;top:342px;font-size:17.6px;color:#9b9da6;transform:translate(0.95px,0.80px) scaleX(0.9256);font-weight:700;">Admiralty code:</span>
<span class="t" style="left:394px;top:370px;font-size:17.6px;color:#e9eaed;transform:translate(0.67px,0.50px) scaleX(0.9446);-webkit-text-stroke:0.5px #e9eaed;">C3</span>
<span class="t" style="left:550px;top:342px;font-size:17.6px;color:#9b9da6;transform:translate(0.40px,0.80px) scaleX(0.9298);font-weight:700;">TLP:</span>
<span class="t" style="left:38px;top:431px;font-size:17.6px;color:#4aa3f3;transform:translate(0.02px,0.50px) scaleX(1.0248);-webkit-text-stroke:0.45px #4aa3f3;">Main Info</span>
<span class="t" style="left:132px;top:434px;font-size:17.6px;color:#a2a4ab;transform:translate(0.79px,0.90px) scaleX(0.9144);font-weight:700;">Phishing Links</span>
<span class="t" style="left:269px;top:435px;font-size:17.6px;color:#d9dade;transform:translate(0.35px,0.40px) scaleX(0.8150);-webkit-text-stroke:0.5px #d9dade;">1</span>
<span class="t" style="left:59px;top:535px;font-size:17.6px;color:#f0f1f3;transform:translate(0.15px,0.20px) scaleX(0.9194);font-weight:700;">Screenshot</span>
<span class="t" style="left:59px;top:915px;font-size:17.6px;color:#f0f1f3;transform:translate(0.30px,0.90px) scaleX(0.9116);font-weight:700;">Phishing Kit</span>
<span class="t" style="left:619px;top:535px;font-size:17.6px;color:#f0f1f3;transform:translate(0.37px,0.40px) scaleX(0.9359);font-weight:700;">Domain Info</span>
<span class="t" style="left:619px;top:580px;font-size:17.1px;color:#a1a3aa;transform:translate(0.24px,0.20px) scaleX(1.0187);-webkit-text-stroke:0.4px #a1a3aa;">Domain registrar</span>
<span class="t" style="left:619px;top:655px;font-size:17.1px;color:#a1a3aa;transform:translate(0.25px,0.60px) scaleX(1.0107);-webkit-text-stroke:0.4px #a1a3aa;">Registrar date</span>
<span class="t" style="left:619px;top:730px;font-size:17.1px;color:#a1a3aa;transform:translate(0.24px,0.60px) scaleX(1.0175);-webkit-text-stroke:0.4px #a1a3aa;">Expiration date</span>
<span class="t" style="left:619px;top:807px;font-size:17.1px;color:#a1a3aa;transform:translate(0.37px,0.70px) scaleX(0.9971);-webkit-text-stroke:0.4px #a1a3aa;">Source</span>
<span class="t" style="left:619px;top:836px;font-size:17.6px;color:#e9eaed;transform:translate(0.41px,0.70px) scaleX(0.9819);-webkit-text-stroke:0.5px #e9eaed;">ci-phish-connector-linked_same_url</span>
<span class="t" style="left:619px;top:935px;font-size:17.6px;color:#f0f1f3;transform:translate(0.36px,0.80px) scaleX(0.9413);font-weight:700;">IP-address Info</span>
<span class="t" style="left:619px;top:980px;font-size:17.1px;color:#a1a3aa;transform:translate(0.19px,0.40px) scaleX(1.0560);-webkit-text-stroke:0.4px #a1a3aa;">Hosting</span>
<span class="t" style="left:779px;top:980px;font-size:17.1px;color:#a1a3aa;transform:translate(0.75px,0.40px) scaleX(1.0079);-webkit-text-stroke:0.4px #a1a3aa;">IP address</span>
<span class="t" style="left:940px;top:980px;font-size:17.1px;color:#a1a3aa;transform:translate(0.10px,0.40px) scaleX(1.0504);-webkit-text-stroke:0.4px #a1a3aa;">Location</span>
<span class="t" style="left:620px;top:1015px;font-size:17.6px;color:#e9eaed;transform:translate(0.15px,0.90px) scaleX(0.9950);-webkit-text-stroke:0.5px #e9eaed;">Aerotek Bilisim</span>
<span class="t" style="left:779px;top:1015px;font-size:17.6px;color:#e9eaed;transform:translate(0.56px,0.90px) scaleX(0.9923);-webkit-text-stroke:0.5px #e9eaed;">178.157.14.147</span>
<span class="t" style="left:969px;top:1015px;font-size:17.6px;color:#e9eaed;transform:translate(0.19px,0.90px) scaleX(0.9345);-webkit-text-stroke:0.5px #e9eaed;">Turkey</span>
<span class="t" style="left:619px;top:1040px;font-size:17.6px;color:#e9eaed;transform:translate(0.62px,0.60px) scaleX(0.9606);-webkit-text-stroke:0.5px #e9eaed;">Sanayi ve Ticaret AS</span>
<span class="t" style="left:1180px;top:535px;font-size:17.6px;color:#f0f1f3;transform:translate(0.00px,0.50px) scaleX(0.9570);font-weight:700;">Title</span>
<span class="t" style="left:1179px;top:580px;font-size:17.1px;color:#a1a3aa;transform:translate(0.64px,0.50px) scaleX(0.9905);-webkit-text-stroke:0.4px #a1a3aa;">URL title</span>
<span class="t" style="left:1205px;top:610px;font-size:17.6px;color:#e9eaed;transform:translate(0.81px,0.50px) scaleX(0.9892);-webkit-text-stroke:0.5px #e9eaed;">Sign in to continue</span>
<span class="t" style="left:1179px;top:655px;font-size:17.1px;color:#a1a3aa;transform:translate(0.36px,0.50px) scaleX(1.0059);-webkit-text-stroke:0.4px #a1a3aa;">Favicon hash</span>
<span class="t" style="left:1189px;top:690px;font-size:17px;color:#6cb6f5;transform:translate(0.61px,0.80px) scaleX(1.0231);font-weight:700;">MD5</span>
<span class="t" style="left:1247px;top:690px;font-size:17px;color:#e6e7ea;transform:translate(0.75px,0.80px) scaleX(0.9405);font-weight:700;">SHA1</span>
<span class="t" style="left:1312px;top:690px;font-size:17px;color:#e6e7ea;transform:translate(0.43px,0.80px) scaleX(1.0021);font-weight:700;">SHA256</span>
<span class="t" style="left:1179px;top:725px;font-size:17.6px;color:#e9eaed;transform:translate(0.70px,0.30px) scaleX(1.0078);-webkit-text-stroke:0.5px #e9eaed;">da7d3afa81ca3f0769fb85f58e55b47c</span>
<span class="t" style="left:1178px;top:815px;font-size:17.1px;color:#a1a3aa;transform:translate(0.82px,0.60px) scaleX(1.0303);-webkit-text-stroke:0.4px #a1a3aa;">Home page title</span>
<span class="t" style="left:1179px;top:845px;font-size:17.6px;color:#e9eaed;transform:translate(0.20px,0.90px) scaleX(0.9927);-webkit-text-stroke:0.5px #e9eaed;">Sign in to continue</span>
<span class="t" style="left:1179px;top:943px;font-size:17.6px;color:#f0f1f3;transform:translate(0.25px,0.40px) scaleX(0.9260);font-weight:700;">Signature</span>
<span class="t" style="left:1178px;top:989px;font-size:17.1px;color:#a1a3aa;transform:translate(0.80px,0.50px) scaleX(1.0500);-webkit-text-stroke:0.4px #a1a3aa;">Manual</span>
<span class="t" style="left:1179px;top:1018px;font-size:17.6px;color:#e9eaed;transform:translate(0.21px,0.70px) scaleX(0.9843);-webkit-text-stroke:0.5px #e9eaed;">excel_password</span>
</body>
</html>
